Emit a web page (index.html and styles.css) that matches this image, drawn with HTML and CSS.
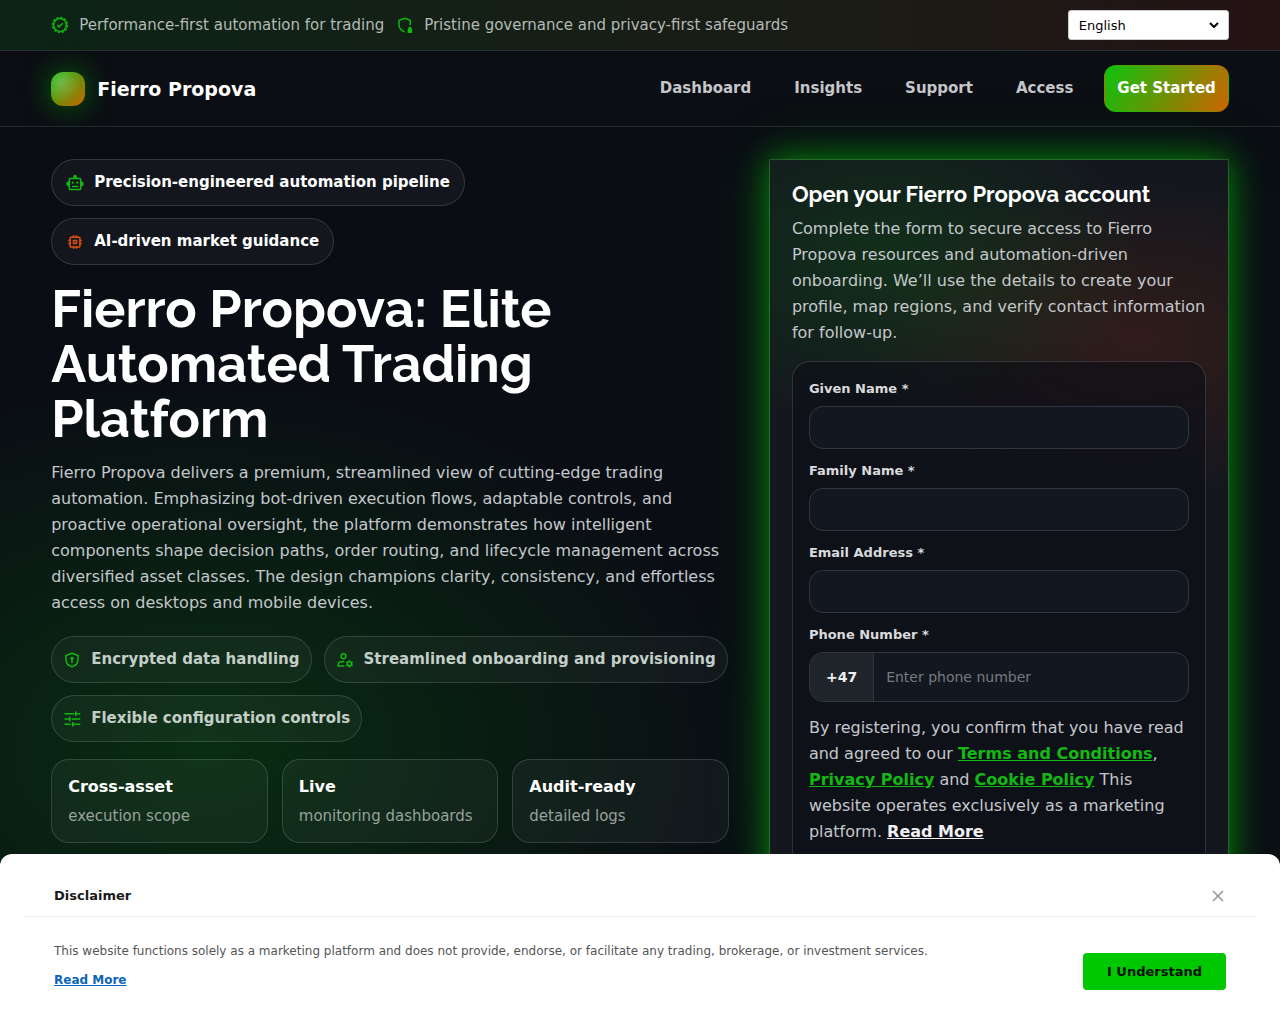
FILE: index.html
```
<!DOCTYPE html>
<html lang="en">
	<head>
		<meta charset="UTF-8">
		<meta name="viewport" content="width=device-width, initial-scale=1">
		<link rel="stylesheet" href="styles.css">
		<title>Fierro Propova</title>
	</head>
	<body>
		<div class="topbar">
			<div class="wrap topbar-row">
				<ul class="notes">
					<li>
						<svg class="icon" viewBox="0 0 24 24"><circle cx="12" cy="12" r="8.600"/><circle cx="12" cy="12" r="10" stroke-dasharray="3 2.236"/><path d="M8.400 12.200l2.500 2.500 4.800-4.900"/></svg>
						<span>Performance-first automation for trading</span>
					</li>
					<li>
						<svg class="icon" viewBox="0 0 24 24"><path d="M19 12V5.600L12 3 4 5.600V11c0 5 2.600 8.400 7.500 10"/><path class="fill" d="M15.500 17h1v-1a2 2 0 0 1 4 0v1h1v5.500h-6z"/></svg>
						<span>Pristine governance and privacy-first safeguards</span>
					</li>
				</ul>
				<select class="lang" aria-label="Language">
					<option>English</option>
				</select>
			</div>
		</div>

		<header class="header">
			<div class="wrap header-row">
				<a class="brand" href="#"><span class="brand-mark"></span>Fierro Propova</a>
				<nav class="nav">
					<a href="#">Dashboard</a>
					<a href="#">Insights</a>
					<a href="#">Support</a>
					<a href="#">Access</a>
					<a class="nav-cta" href="#signup">Get Started</a>
				</nav>
			</div>
		</header>

		<main class="wrap hero">
			<section class="intro">
				<div class="badges">
					<span class="badge">
						<svg class="icon" viewBox="0 0 24 24"><rect x="4.500" y="6" width="15" height="14.500" rx="1"/><path d="M8 16.500h8M12 6V3"/><circle class="fill" cx="12" cy="3.500" r="2.500"/><circle class="fill" cx="9" cy="11.500" r="1.500"/><circle class="fill" cx="15" cy="11.500" r="1.500"/><path class="fill" d="M4 9.500a3.500 3.500 0 0 0 0 7zM20 9.500a3.500 3.500 0 0 1 0 7z"/></svg>
						Precision-engineered automation pipeline
					</span>
					<span class="badge badge-warm">
						<svg class="icon" viewBox="0 0 24 24"><rect x="5.500" y="5.500" width="13" height="13" rx="1"/><rect x="10" y="10" width="4" height="4"/><path d="M10 3v3M14 3v3M10 18v3M14 18v3M3 10h3M3 14h3M18 10h3M18 14h3"/></svg>
						AI-driven market guidance
					</span>
				</div>
				<h1>Fierro Propova: Elite Automated Trading Platform</h1>
				<p class="lead">Fierro Propova delivers a premium, streamlined view of cutting-edge trading automation. Emphasizing bot-driven execution flows, adaptable controls, and proactive operational oversight, the platform demonstrates how intelligent components shape decision paths, order routing, and lifecycle management across diversified asset classes. The design champions clarity, consistency, and effortless access on desktops and mobile devices.</p>
				<ul class="chips">
					<li class="chip">
						<svg class="icon" viewBox="0 0 24 24"><path d="M12 3l8 3v5c0 4.800-3.200 8.700-8 10.200-4.800-1.500-8-5.400-8-10.200V6z"/><circle class="fill" cx="12" cy="10" r="2.200"/><path d="M12 10v6"/></svg>
						Encrypted data handling
					</li>
					<li class="chip">
						<svg class="icon" viewBox="0 0 24 24"><circle cx="10" cy="7" r="3.200"/><path d="M11 20H3v-2.500C3 15 6.500 14 11 14"/><circle cx="18" cy="17" r="2.800"/><path d="M18 12v2M18 20v2M13.700 14.500l1.700 1M20.600 18.500l1.700 1M13.700 19.500l1.700-1M20.600 15.500l1.700-1"/></svg>
						Streamlined onboarding and provisioning
					</li>
					<li class="chip">
						<svg class="icon" viewBox="0 0 24 24"><path d="M2 5h13M17 5h6M17 2v6M2 12h6M9 9v6M12 12h11M2 19h8M13 16v6M13 19h10"/></svg>
						Flexible configuration controls
					</li>
				</ul>
				<div class="stats">
					<div class="stat"><strong>Cross-asset</strong><span>execution scope</span></div>
					<div class="stat"><strong>Live</strong><span>monitoring dashboards</span></div>
					<div class="stat"><strong>Audit-ready</strong><span>detailed logs</span></div>
				</div>
			</section>

			<section class="card" id="signup">
				<h2>Open your Fierro Propova account</h2>
				<p>Complete the form to secure access to Fierro Propova resources and automation-driven onboarding. We’ll use the details to create your profile, map regions, and verify contact information for follow-up.</p>
				<form class="form">
					<div class="field">
						<label for="first">Given Name *</label>
						<input type="text" id="first">
					</div>
					<div class="field">
						<label for="last">Family Name *</label>
						<input type="text" id="last">
					</div>
					<div class="field">
						<label for="email">Email Address *</label>
						<input type="email" id="email">
					</div>
					<div class="field">
						<label for="phone">Phone Number *</label>
						<div class="phone">
							<span class="prefix">+47</span>
							<input type="tel" id="phone" placeholder="Enter phone number">
						</div>
					</div>
					<p class="legal">By registering, you confirm that you have read and agreed to our <a href="#">Terms and Conditions</a>, <a href="#">Privacy Policy</a> and <a href="#">Cookie Policy</a> This website operates exclusively as a marketing platform. <a class="more" href="#">Read More</a></p>
				</form>
			</section>
		</main>

		<div class="disclaimer" role="dialog" aria-labelledby="disclaimer-title">
			<div class="disclaimer-head">
				<strong id="disclaimer-title">Disclaimer</strong>
				<button class="close" type="button" aria-label="Close"><svg viewBox="0 0 12 12"><path d="M1 1l10 10M11 1L1 11"/></svg></button>
			</div>
			<div class="disclaimer-body">
				<div class="disclaimer-text">
					<p>This website functions solely as a marketing platform and does not provide, endorse, or facilitate any trading, brokerage, or investment services.</p>
					<a href="#">Read More</a>
				</div>
				<button class="accept" type="button">I Understand</button>
			</div>
		</div>
	</body>
</html>
```

FILE: styles.css
```
* {
	box-sizing: border-box;
}
body {
	display: flex;
	flex-direction: column;
	min-height: 100vh;
	margin: 0;
	background:
		radial-gradient(560px 380px at 16% 750px, rgba(0, 200, 0, 0.17), transparent 100%),
		#0a0d14;
	color: #fff;
	font-family: "DejaVu Sans", sans-serif;
	font-size: 16px;
	line-height: 26px;
}
h1, h2, p, ul {
	margin: 0;
	padding: 0;
}
ul {
	list-style: none;
}
.wrap {
	width: 92%;
	max-width: 1200px;
	margin: 0 auto;
}
.icon {
	flex: none;
	width: 18px;
	height: 18px;
	fill: none;
	stroke: #0fb90f;
	stroke-width: 2;
}
.icon .fill {
	fill: #0fb90f;
	stroke: none;
}

/* top bar */
.topbar {
	border-bottom: 1px solid #2a2f31;
	background: linear-gradient(90deg, #0c2415, #1b1c16 65%, #1f1715 85%, #251213);
}
.topbar-row, .header-row {
	display: flex;
	align-items: center;
	justify-content: space-between;
}
.topbar-row {
	padding: 10px 0;
}
.notes {
	display: flex;
	gap: 12px;
	color: #b3bab5;
	font-size: 15px;
}
.notes li {
	display: flex;
	align-items: center;
	gap: 10px;
}
.lang {
	appearance: none;
	width: 161px;
	height: 30px;
	padding: 0 10px;
	border: 1px solid #ccc;
	border-radius: 3px;
	background: #fff url("data:image/svg+xml,%3Csvg xmlns='http://www.w3.org/2000/svg' width='10' height='6' fill='none' stroke='black' stroke-width='2'%3E%3Cpath d='M1 1l4 4 4-4'/%3E%3C/svg%3E") no-repeat right 9px center;
	color: #000;
	font-family: inherit;
	font-size: 13px;
}

/* header */
.header {
	border-bottom: 1px solid #24292f;
	background: #0b0e13;
}
.header-row {
	padding: 14px 0;
}
.brand {
	display: flex;
	align-items: center;
	gap: 12px;
	color: #fff;
	font-size: 19px;
	font-weight: bold;
	text-decoration: none;
}
.brand-mark {
	width: 34px;
	height: 34px;
	border-radius: 12px;
	background:
		radial-gradient(circle at 30% 30%, rgba(255, 255, 255, 0.25), transparent 60%),
		linear-gradient(135deg, #0dbb0d, #c86400);
	box-shadow: 0 0 28px rgba(0, 200, 0, 0.5);
}
.nav {
	display: flex;
	align-items: center;
	gap: 19px;
}
.nav a {
	padding: 10px 12px;
	color: #c4c6c9;
	font-size: 15px;
	font-weight: bold;
	line-height: 25px;
	text-decoration: none;
}
.nav .nav-cta {
	border: 1px solid transparent;
	border-radius: 12px;
	background: linear-gradient(120deg, #0cc30c, #cd6400);
	color: #fff;
}

/* hero */
.hero {
	display: grid;
	flex: 1;
	grid-template-columns: 1.12fr 0.76fr;
	gap: 40px;
	padding: 32px 0;
}
.badges, .chips {
	display: flex;
	flex-wrap: wrap;
	gap: 12px;
}
.badge, .chip {
	display: flex;
	align-items: center;
	gap: 10px;
	padding: 10px 14px;
	border: 1px solid rgba(255, 255, 255, 0.14);
	border-radius: 999px;
	background: rgba(255, 255, 255, 0.04);
	font-size: 15px;
	font-weight: bold;
	line-height: 25px;
}
.chip {
	padding: 10px 11px;
	color: #c3cec8;
}
.badge-warm .icon {
	stroke: #e0500c;
}
h1, h2 {
	font-family: Raleway, "Open Sans", sans-serif;
	font-weight: 700;
}
h1 {
	margin: 16px 0 14px;
	font-size: 52px;
	line-height: 55px;
}
.lead, .card p {
	color: #c3c7cb;
}
.chips {
	margin: 20px 0 17px;
}
.stats {
	display: grid;
	grid-template-columns: repeat(3, 1fr);
	gap: 14px;
}
.stat {
	display: flex;
	flex-direction: column;
	gap: 4px;
	padding: 14px 16px;
	border: 1px solid rgba(255, 255, 255, 0.14);
	border-radius: 18px;
	background: rgba(255, 255, 255, 0.04);
}
.stat span {
	color: #96a29b;
	font-size: 15px;
	line-height: 24px;
}

/* sign up card */
.card {
	display: flex;
	flex-direction: column;
	padding: 22px;
	border: 1px solid rgba(255, 255, 255, 0.14);
	background:
		radial-gradient(260px 170px at 25% 100px, rgba(0, 200, 0, 0.14), transparent 100%),
		radial-gradient(280px 160px at 80% 180px, rgba(220, 60, 0, 0.14), transparent 100%),
		#14171e;
	background-clip: padding-box;
	box-shadow: 0 0 28px rgba(0, 200, 0, 0.55), 0 0 60px rgba(0, 200, 0, 0.25);
}
h2 {
	margin-bottom: 9px;
	font-size: 22px;
	line-height: 25px;
}
.form {
	display: flex;
	flex: 1;
	flex-direction: column;
	gap: 11px;
	margin-top: 15px;
	padding: 16px;
	border: 1px solid rgba(255, 255, 255, 0.14);
	border-radius: 18px;
	background: rgba(12, 14, 22, 0.6);
}
.field {
	display: flex;
	flex-direction: column;
	gap: 7px;
}
.field label {
	color: #d9dadc;
	font-size: 13px;
	font-weight: bold;
	line-height: 21px;
}
.field input {
	width: 100%;
	height: 43px;
	padding: 0 12px;
	border: 1px solid #32373f;
	border-radius: 14px;
	background: #131820;
	color: #fff;
	font-family: inherit;
	font-size: 14px;
}
.phone {
	display: flex;
	overflow: hidden;
	border: 1px solid #32373f;
	border-radius: 14px;
	background: #131820;
}
.phone input {
	height: 48px;
	border: 0;
	border-radius: 0;
	background: none;
}
.phone input::placeholder {
	color: #757a80;
}
.prefix {
	display: flex;
	align-items: center;
	padding: 0 16px;
	border-right: 1px solid #32373f;
	background: #20252b;
	color: #f0f0f0;
	font-size: 14px;
	font-weight: bold;
}
.card .legal {
	margin-top: 2px;
}
.legal a {
	color: #12b912;
	font-weight: bold;
}
.legal .more {
	color: #f0f0f2;
}

/* disclaimer banner */
.disclaimer {
	position: fixed;
	right: 0;
	bottom: 0;
	left: 0;
	padding: 24px 24px 34px;
	border-radius: 12px 12px 0 0;
	background: #fff;
}
.disclaimer-head, .disclaimer-body {
	display: flex;
	align-items: center;
	justify-content: space-between;
	padding: 0 30px;
}
.disclaimer-head {
	padding-top: 5px;
	padding-bottom: 7px;
	border-bottom: 1px solid #ececec;
	color: #1a1a1a;
	font-size: 13px;
}
.close {
	width: 16px;
	height: 16px;
	padding: 2px;
	border: 0;
	background: none;
}
.close svg {
	display: block;
	width: 12px;
	height: 12px;
	stroke: #949494;
	stroke-width: 1.5;
}
.disclaimer-body {
	align-items: flex-end;
	padding-top: 24px;
	color: #555;
	font-size: 12px;
	line-height: 20px;
}
.disclaimer-text a {
	display: inline-block;
	margin-top: 9px;
	color: #0b66b8;
	font-weight: bold;
}
.accept {
	height: 37px;
	padding: 0 24px;
	border: 0;
	border-radius: 4px;
	background: #00c800;
	color: #071007;
	font-family: inherit;
	font-size: 13px;
	font-weight: bold;
}
```
